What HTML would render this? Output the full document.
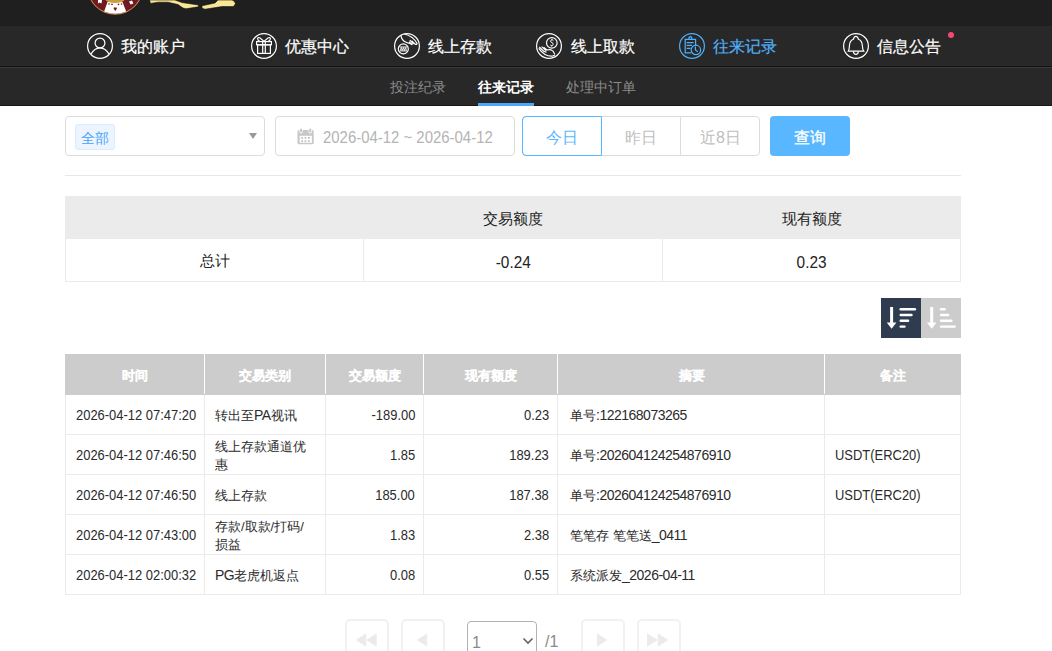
<!DOCTYPE html>
<html><head><meta charset="utf-8">
<style>
*{box-sizing:border-box;margin:0;padding:0}
html,body{width:1052px;height:651px;overflow:hidden;background:#fff;font-family:"Liberation Sans",sans-serif;color:#333}
.abs{position:absolute}
#top{position:absolute;left:0;top:0;width:1052px;height:26px;background:#1f1f1f}
#nav{position:absolute;left:0;top:26px;width:1052px;height:42px;background:#282828;border-bottom:1px solid #383838}
#nav:after{content:'';position:absolute;left:0;top:40px;width:1052px;height:1px;background:#141414}
#sub{position:absolute;left:0;top:68px;width:1052px;height:38px;background:#282828;border-bottom:1px solid #161616}
.ni{position:absolute;top:7px;height:26px}
.nt{position:absolute;top:10.5px;font-size:16px;font-weight:400;-webkit-text-stroke:0.2px currentColor;color:#fff;white-space:nowrap;line-height:20px}
.st{position:absolute;top:10px;font-size:14px;color:#8c8c8c;white-space:nowrap;line-height:18px}

.box{position:absolute;border:1px solid #dcdcdc;border-radius:4px}
table{position:absolute;border-collapse:collapse;table-layout:fixed}
.sum td{height:43px;border:1px solid #ebebeb;text-align:center;font-size:15px;color:#222;padding:2px 0 0 0}
.sum tr.h td{height:42px;background:#ebebeb;border-color:#ebebeb;padding-top:3px}
.dt td{height:40px;border:1px solid #ebebeb;font-size:13px;color:#2b2b2b;padding:2px 10px 0 10px;line-height:18px}
.dt td:nth-child(5){padding-left:12px}
.dt td:first-child{white-space:nowrap}
.dt tr.h td{background:#cccccc;color:#fff;font-weight:bold;padding-top:2px;-webkit-text-stroke:0.15px #fff;text-align:center;border-color:#fff;border-top-color:#cccccc;border-bottom-color:#cccccc}
.dt tr.h td:first-child{border-left-color:#cccccc}
.dt tr.h td:last-child{border-right-color:#cccccc}
.dt td.r{text-align:right;padding-right:8px}
.pb{position:absolute;top:619px;width:44px;height:40px;border:2px solid #f1f1f1;border-radius:5px}
.pb svg{position:absolute;left:-2px;top:-2px}

.L{display:inline-block;font-size:14px;transform:scaleX(.925);transform-origin:0 50%}
.L.R{transform-origin:100% 50%}
.L.S{font-size:16px;transform:scaleX(.96);transform-origin:50% 50%;position:relative;top:2px}
.M{font-size:14px;letter-spacing:-0.5px}
</style></head><body>
<div id="top">
  <svg class="abs" style="left:0;top:0" width="260" height="26" viewBox="0 0 260 26">
    <circle cx="115.2" cy="-13.2" r="28.4" fill="#1a1a1a"/>
    <circle cx="115.2" cy="-13.2" r="28" fill="#d08a55"/>
    <circle cx="115.2" cy="-13.2" r="27" fill="#6f1a20"/>
    <defs><clipPath id="lc"><circle cx="115.2" cy="-13.2" r="27"/></clipPath></defs><path clip-path="url(#lc)" d="M107.5 2 L122.5 2 L128 16 L102.5 16 Z" fill="#ffffff"/>
    <ellipse cx="115" cy="-0.6" rx="9.5" ry="3.6" fill="#c9a040"/>
    <path d="M98 0 L102 0 L101.5 3.6 L99.5 2.4 L98 3.4 Z M129 1.4 L132 0.6 L133.4 3.6 L130.6 4.6 Z" fill="#ffffff"/>
    <g fill="#6f1a20"><circle cx="109" cy="4" r="0.8"/><circle cx="112" cy="4.4" r="0.8"/><circle cx="118.5" cy="4.4" r="0.8"/><circle cx="121.5" cy="4" r="0.8"/><path d="M113.5 8 Q115 6.6 115.3 8 Q115.6 6.6 117 8 Q116.5 9.6 115.3 11 Q114 9.6 113.5 8 Z"/></g>
    <path d="M149.5 0 L175 0 L182 2.6 L198.5 5 L198.5 6.8 L186 8.8 L183 8 L178 4.6 L168 2.2 L158 2.2 L150.5 3.4 Z" fill="#f9e797" stroke="#0d0d0d" stroke-width="0.6"/>
    <path d="M202 5.8 L215 3 L218 0 L232 0 L234 1 L235.5 3.6 L233.5 6.6 L222 6.6 L205 9.2 L202 8.2 Z" fill="#f9e797" stroke="#0d0d0d" stroke-width="0.6"/>
  </svg>
</div>
<div id="nav">
  <!-- icons -->
  <svg class="ni" style="left:87px" width="26" height="26" viewBox="0 0 26 26" fill="none" stroke="#fff" stroke-width="1.2">
    <circle cx="13" cy="13" r="12.4"/><circle cx="13" cy="10" r="4.9"/><path d="M3.9 21.3 Q7.5 14.9 13 14.9 Q18.5 14.9 22.1 21.3"/>
  </svg>
  <div class="nt" style="left:121px">我的账户</div>
  <svg class="ni" style="left:251px" width="26" height="26" viewBox="0 0 26 26" fill="none" stroke="#fff" stroke-width="1.2">
    <circle cx="13" cy="13" r="12.4"/><rect x="5.6" y="8.6" width="14.8" height="3.2"/><rect x="6.6" y="11.8" width="12.8" height="8.6"/><path d="M11.7 8.6 V20.4 M14.3 8.6 V20.4"/><path d="M13 8.4 L9 5 Q7 3.8 6.6 5.4 Q6.6 7.4 9 8.6 M13 8.4 L17 5 Q19 3.8 19.4 5.4 Q19.4 7.4 17 8.6"/>
  </svg>
  <div class="nt" style="left:285px">优惠中心</div>
  <svg class="ni" style="left:394px" width="26" height="26" viewBox="0 0 26 26" fill="none" stroke="#fff" stroke-width="1.2">
    <circle cx="13" cy="13" r="12.4"/><circle cx="9.3" cy="15.9" r="5"/><path d="M5.6 14 H13 M5.6 17.9 H13" stroke-width="1"/><path d="M6.2 17.4 L7.4 14.6 L8.3 17.4 L9.5 14.6 L10.4 17.4 L11.6 14.6 L12.4 17.4" stroke-width="0.9"/>
    <path d="M6.8 1.8 Q7.6 7.2 11.6 9 Q14 10 16.6 10.8 L18.4 11.8"/><path d="M10.4 1 Q14.5 2 18 4.4 Q21.5 7.2 23 10.6 Q22.8 11.8 21.2 11.2 L17.6 7.8 M15.8 7.2 L19.6 11 M15 8.8 L18.2 11.8" />
  </svg>
  <div class="nt" style="left:428px">线上存款</div>
  <svg class="ni" style="left:536px" width="26" height="26" viewBox="0 0 26 26" fill="none" stroke="#fff" stroke-width="1.2">
    <circle cx="13" cy="13" r="12.4"/><circle cx="15.8" cy="9.9" r="5.3"/><path d="M17.4 7.6 Q16.8 6.8 15.8 6.9 Q14.5 7.1 14.6 8.2 Q14.8 9.3 16 9.7 Q17.4 10.2 17.2 11.5 Q16.9 12.6 15.6 12.6 Q14.6 12.5 14.2 11.8 M15.9 6 V6.9 M15.7 12.6 V13.6" stroke-width="1"/>
    <path d="M2.8 15.4 Q5.5 19.5 9 21.5 Q12.5 23.4 16 23.2 L19 22"/><path d="M3.2 14 L8 18.4 L10.6 19.2 M5.6 13.6 L10 17.6 M7.6 14.2 L11 17 Q13 16.4 15 16.8 Q17.5 17.8 18.8 21.4"/>
  </svg>
  <div class="nt" style="left:571px">线上取款</div>
  <svg class="ni" style="left:679px" width="26" height="26" viewBox="0 0 26 26" fill="none" stroke="#50b0f8" stroke-width="1.2">
    <circle cx="13" cy="13" r="12.4"/><path d="M12.2 19.8 H6.2 V6.4 H16.6 V12.4"/><path d="M9.8 6.2 Q9.8 3.6 11.3 3.6 Q12.8 3.6 12.8 6.2"/><path d="M7.6 9.6 H14.6 M7.6 12.3 H13 M7.6 15.3 H11.6"/><circle cx="16.9" cy="16.9" r="4.7"/><path d="M16.4 13.4 V16.9 L18.9 18.7"/>
  </svg>
  <div class="nt" style="left:713px;color:#50b0f8">往来记录</div>
  <svg class="ni" style="left:843px" width="26" height="26" viewBox="0 0 26 26" fill="none" stroke="#fff" stroke-width="1.2">
    <circle cx="13" cy="13" r="12.4"/><path d="M5.3 18.2 H20.7 Q19.5 16.5 19.4 13 Q19.2 7.6 15.4 6.2 Q14.6 3.4 12.9 3.4 Q11.2 3.4 10.4 6.2 Q6.6 7.6 6.4 13 Q6.3 16.5 5.3 18.2 Z"/><path d="M10.4 18.2 Q10.6 21.4 12.9 21.4 Q15.2 21.4 15.4 18.2"/>
  </svg>
  <div class="nt" style="left:877px">信息公告</div>
  <div class="abs" style="left:948px;top:6px;width:6px;height:6px;border-radius:50%;background:#f4486c"></div>
</div>
<div id="sub">
  <div class="st" style="left:390px">投注纪录</div>
  <div class="st" style="left:478px;color:#fff;font-weight:bold">往来记录</div>
  <div class="abs" style="left:478px;top:35px;width:56px;height:3px;background:#4aa8f5"></div>
  <div class="st" style="left:566px">处理中订单</div>
</div>

<div id="main">
  <div class="box" style="left:65px;top:116px;width:200px;height:40px"></div>
  <div class="abs" style="left:75px;top:124px;width:40px;height:26px;background:#ecf5ff;border:1px solid #d9ecff;border-radius:3px;color:#4aa3f8;font-size:14px;line-height:26px;text-align:center">全部</div>
  <div class="abs" style="left:249px;top:133px;width:0;height:0;border-left:4.5px solid transparent;border-right:4.5px solid transparent;border-top:6px solid #999"></div>
  <div class="box" style="left:275px;top:116px;width:240px;height:40px"></div>
  <svg class="abs" style="left:297px;top:128px" width="18" height="18" viewBox="0 0 18 18">
    <rect x="0.5" y="2.1" width="16.2" height="14.2" rx="1.6" fill="#c8c8c8"/>
    <rect x="2.7" y="7.8" width="12.2" height="7" fill="#fff"/>
    <rect x="2.4" y="0" width="3.2" height="5.4" rx="1.4" fill="#fff"/><rect x="11.6" y="0" width="3.2" height="5.4" rx="1.4" fill="#fff"/>
    <rect x="3" y="0.4" width="2" height="4.2" rx="1" fill="#c8c8c8"/><rect x="12.2" y="0.4" width="2" height="4.2" rx="1" fill="#c8c8c8"/>
    <g fill="#c8c8c8"><rect x="4.2" y="8.9" width="1.9" height="1.9"/><rect x="7.5" y="8.9" width="1.9" height="1.9"/><rect x="10.9" y="8.9" width="1.9" height="1.9"/><rect x="4.2" y="12.2" width="1.9" height="1.9"/><rect x="7.5" y="12.2" width="1.9" height="1.9"/><rect x="10.9" y="12.2" width="1.9" height="1.9"/></g>
  </svg>
  <div class="abs" style="left:323px;top:129px;font-size:16px;line-height:18px;color:#b4b4b4;white-space:nowrap;transform:scaleX(.933);transform-origin:0 50%">2026-04-12 ~ 2026-04-12</div>
  <div class="abs" style="left:522px;top:116px;width:238px;height:40px;border:1px solid #dcdcdc;border-radius:4px"></div>
  <div class="abs" style="left:680px;top:116px;width:1px;height:40px;background:#dcdcdc"></div>
  <div class="abs" style="left:522px;top:116px;width:80px;height:40px;border:1px solid #58b7ff;border-radius:4px 0 0 4px;color:#58b7ff;font-size:16px;line-height:42px;text-align:center">今日</div>
  <div class="abs" style="left:602px;top:116px;width:78px;height:40px;color:#c0c0c0;font-size:16px;line-height:44px;text-align:center">昨日</div>
  <div class="abs" style="left:681px;top:116px;width:79px;height:40px;color:#c0c0c0;font-size:16px;line-height:44px;text-align:center">近8日</div>
  <div class="abs" style="left:770px;top:116px;width:80px;height:40px;background:#58b7ff;border-radius:4px;color:#fff;font-size:16px;font-weight:400;-webkit-text-stroke:0.3px #fff;line-height:44px;text-align:center">查询</div>
  <div class="abs" style="left:65px;top:175px;width:896px;height:1px;background:#e8e8e8"></div>

  <table class="sum" style="left:65px;top:196px;width:895px"><colgroup><col style="width:298px"><col style="width:299px"><col style="width:298px"></colgroup>
    <tr class="h"><td></td><td>交易额度</td><td>现有额度</td></tr>
    <tr><td>总计</td><td><span class="L S">-0.24</span></td><td><span class="L S">0.23</span></td></tr>
  </table>

  <div class="abs" style="left:881px;top:298px;width:40px;height:40px;background:#2f3c4f"></div>
  <div class="abs" style="left:921px;top:298px;width:40px;height:40px;background:#cccccc"></div>
  <svg class="abs" style="left:881px;top:298px" width="80" height="40" viewBox="0 0 80 40" fill="#fff">
    <rect x="9.1" y="9" width="3" height="16.5"/><path d="M5.8 24.6 H15.4 L10.6 30.8 Z"/>
    <rect x="18.5" y="10" width="16.6" height="2.4" rx="1.2"/><rect x="18.5" y="15.8" width="13.2" height="2.4" rx="1.2"/><rect x="18.5" y="21.6" width="9.8" height="2.4" rx="1.2"/><rect x="18.5" y="27.4" width="6.2" height="2.4" rx="1.2"/>
    <rect x="49.2" y="9" width="3" height="16.5"/><path d="M45.9 24.6 H55.5 L50.7 30.8 Z"/>
    <rect x="58.8" y="10" width="6" height="2.4" rx="1.2"/><rect x="58.8" y="15.8" width="9.6" height="2.4" rx="1.2"/><rect x="58.8" y="21.6" width="12.8" height="2.4" rx="1.2"/><rect x="58.8" y="27.4" width="16" height="2.4" rx="1.2"/>
  </svg>

  <table class="dt" style="left:65px;top:354px;width:895px"><colgroup><col style="width:139px"><col style="width:121px"><col style="width:98px"><col style="width:134px"><col style="width:267px"><col style="width:136px"></colgroup>
    <tr class="h"><td>时间</td><td>交易类别</td><td>交易额度</td><td>现有额度</td><td>摘要</td><td>备注</td></tr>
    <tr><td><span class="L">2026-04-12 07:47:20</span></td><td>转出至<span class="M">PA</span>视讯</td><td class="r"><span class="L R">-189.00</span></td><td class="r"><span class="L R">0.23</span></td><td>单号<span class="M">:122168073265</span></td><td></td></tr>
    <tr><td><span class="L">2026-04-12 07:46:50</span></td><td>线上存款通道优惠</td><td class="r"><span class="L R">1.85</span></td><td class="r"><span class="L R">189.23</span></td><td>单号<span class="M">:202604124254876910</span></td><td><span class="L">USDT(ERC20)</span></td></tr>
    <tr><td><span class="L">2026-04-12 07:46:50</span></td><td>线上存款</td><td class="r"><span class="L R">185.00</span></td><td class="r"><span class="L R">187.38</span></td><td>单号<span class="M">:202604124254876910</span></td><td><span class="L">USDT(ERC20)</span></td></tr>
    <tr><td><span class="L">2026-04-12 07:43:00</span></td><td>存款/取款/打码/损益</td><td class="r"><span class="L R">1.83</span></td><td class="r"><span class="L R">2.38</span></td><td>笔笔存 笔笔送<span class="M">_0411</span></td><td></td></tr>
    <tr><td><span class="L">2026-04-12 02:00:32</span></td><td><span class="M">PG</span>老虎机返点</td><td class="r"><span class="L R">0.08</span></td><td class="r"><span class="L R">0.55</span></td><td>系统派发<span class="M">_2026-04-11</span></td><td></td></tr>
  </table>

  <div class="pb" style="left:345px"><svg width="44" height="40" viewBox="0 0 44 40"><path d="M10.7 21 L21.2 14.2 V27.8 Z M21.2 21 L31.7 14.2 V27.8 Z" fill="#ebebeb"/></svg></div>
  <div class="pb" style="left:401px"><svg width="44" height="40" viewBox="0 0 44 40"><path d="M16 21 L26.2 14.2 V27.8 Z" fill="#ebebeb"/></svg></div>
  <div class="abs" style="left:467px;top:621px;width:70px;height:40px;border:1px solid #b3b3b3;border-radius:4px"></div>
  <div class="abs" style="left:472px;top:634px;font-size:16px;line-height:18px;color:#8a8a8a">1</div>
  <svg class="abs" style="left:522px;top:637px" width="12" height="8" viewBox="0 0 12 8"><path d="M1.5 1.5 L6 6 L10.5 1.5" fill="none" stroke="#666" stroke-width="1.7"/></svg>
  <div class="abs" style="left:545px;top:633px;font-size:16px;line-height:18px;color:#8a8a8a">/1</div>
  <div class="pb" style="left:581px"><svg width="44" height="40" viewBox="0 0 44 40"><path d="M26.2 21 L16 14.2 V27.8 Z" fill="#ebebeb"/></svg></div>
  <div class="pb" style="left:637px"><svg width="44" height="40" viewBox="0 0 44 40"><path d="M10 14.2 L21 21 L10 27.8 Z M20.8 14.2 L31.4 21 L20.8 27.8 Z" fill="#ebebeb"/></svg></div>
</div>
</body></html>
